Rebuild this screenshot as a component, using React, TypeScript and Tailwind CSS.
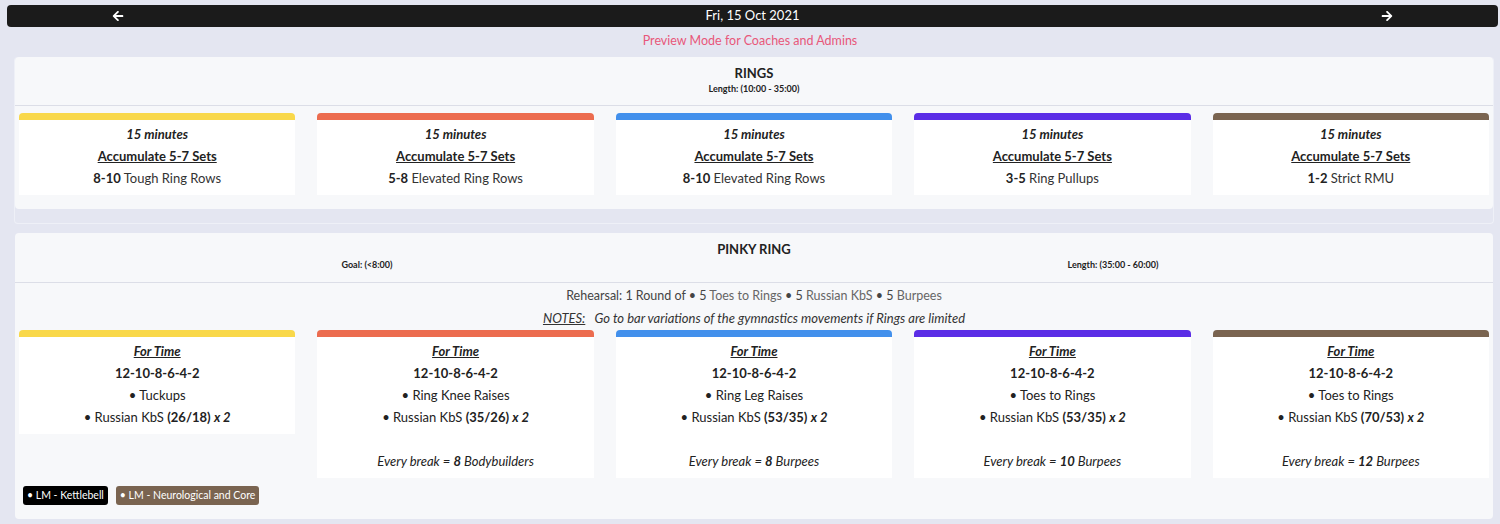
import React from "react";
import { FaArrowLeft, FaArrowRight } from "react-icons/fa";

const colors = ["bg-[#f9d84a]", "bg-[#ec6c4f]", "bg-[#4290ec]", "bg-[#5b2de6]", "bg-[#7a6450]"];

const rings = [
  { n: "8-10", m: "Tough Ring Rows" },
  { n: "5-8", m: "Elevated Ring Rows" },
  { n: "8-10", m: "Elevated Ring Rows" },
  { n: "3-5", m: "Ring Pullups" },
  { n: "1-2", m: "Strict RMU" },
];

const pinky = [
  { a: "Tuckups", w: "(26/18)", b: null as null | { n: string; m: string } },
  { a: "Ring Knee Raises", w: "(35/26)", b: { n: "8", m: "Bodybuilders" } },
  { a: "Ring Leg Raises", w: "(53/35)", b: { n: "8", m: "Burpees" } },
  { a: "Toes to Rings", w: "(53/35)", b: { n: "10", m: "Burpees" } },
  { a: "Toes to Rings", w: "(70/53)", b: { n: "12", m: "Burpees" } },
];

function Card({ color, children }: { color: string; children: React.ReactNode }) {
  return (
    <div className="flex flex-col">
      <div className={`h-[7px] rounded-t-[4px] ${color}`} />
      <div className="bg-white text-center leading-[22px] text-[13px] text-[#222]">{children}</div>
    </div>
  );
}

export default function App() {
  return (
    <div className="min-h-[524px] bg-[#e4e6f1] pt-[5px] font-['Lato','Noto_Sans',sans-serif] text-[#222]">
      <div className="ml-[7px] mr-[2px] h-[22px] bg-[#1b1b1b] rounded-[4px] flex items-center text-white text-[13px]">
        <div className="w-[222px] flex justify-center">
          <FaArrowLeft size={12} />
        </div>
        <div className="flex-1 text-center">Fri, 15 Oct 2021</div>
        <div className="w-[222px] flex justify-center">
          <FaArrowRight size={12} />
        </div>
      </div>
      <div className="h-[30px] pt-[5px] leading-[18px] text-center text-[12.5px] text-[#e8577a]">
        Preview Mode for Coaches and Admins
      </div>

      {/* RINGS */}
      <div className="ml-[14px] mr-[6px] border border-[#eef0f7] border-t-0 rounded-[4px] pb-[14px]">
        <div className="bg-[#f7f8fa] rounded-[4px] pb-[14px]">
          <div className="pt-[7px] pb-[9px] text-center border-b border-[#dcdee7]">
            <div className="text-[13px] font-bold leading-[18px]">RINGS</div>
            <div className="text-[9px] font-bold leading-[14px]">Length: (10:00 - 35:00)</div>
          </div>
          <div className="grid grid-cols-5 gap-[22px] px-[4px] pt-[7px]">
            {rings.map((r, i) => (
              <Card key={i} color={colors[i]}>
                <div className="pt-[3px] pb-[6px]">
                  <div className="font-bold italic">15 minutes</div>
                  <div className="font-bold underline">Accumulate 5-7 Sets</div>
                  <div>
                    <span className="font-bold">{r.n}</span> <span className="text-[#333]">{r.m}</span>
                  </div>
                </div>
              </Card>
            ))}
          </div>
        </div>
      </div>

      {/* PINKY RING */}
      <div className="ml-[15px] mr-[7px] mt-[9px] bg-[#f7f8fa] rounded-[4px] pb-[14px]">
        <div className="pt-[7px] pb-[10px] border-b border-[#dcdee7]">
          <div className="text-[13px] font-bold leading-[18px] text-center">PINKY RING</div>
          <div className="ml-[-21px] w-[1492px] grid grid-cols-2 text-[9px] font-bold leading-[14px] text-center">
            <div>Goal: (&lt;8:00)</div>
            <div>Length: (35:00 - 60:00)</div>
          </div>
        </div>
        <div className="pt-[2px] text-center leading-[22px] text-[#444]">
          <div className="text-[12.5px]">
            Rehearsal: 1 Round of • 5 <span className="text-[#666]">Toes to Rings</span> • 5{" "}
            <span className="text-[#666]">Russian KbS</span> • 5 <span className="text-[#666]">Burpees</span>
          </div>
          <div className="italic text-[#333] text-[13px]">
            <span className="underline">NOTES:</span>&nbsp;&nbsp; Go to bar variations of the gymnastics movements if Rings are limited
          </div>
        </div>
        <div className="grid grid-cols-5 gap-[22px] px-[4px] pt-[1px] items-start">
          {pinky.map((p, i) => (
            <Card key={i} color={colors[i]}>
              <div className="pt-[3px] pb-[6px]">
                <div className="font-bold italic underline">For Time</div>
                <div className="font-bold">12-10-8-6-4-2</div>
                <div>• {p.a}</div>
                <div>
                  • Russian KbS <span className="font-bold">{p.w}</span>{" "}
                  <span className="font-bold italic">x 2</span>
                </div>
                {p.b && (
                  <>
                    <div>&nbsp;</div>
                    <div className="italic">
                      Every break = <span className="font-bold">{p.b.n}</span> {p.b.m}
                    </div>
                  </>
                )}
              </div>
            </Card>
          ))}
        </div>
        <div className="flex gap-[8px] pl-[8px] mt-[8px]">
          <div className="h-[19px] px-[4px] rounded-[3px] bg-black text-white text-[10.5px] leading-[19px]">
            • LM - Kettlebell
          </div>
          <div className="h-[19px] px-[4px] rounded-[3px] bg-[#7a6450] text-white text-[10.5px] leading-[19px]">
            • LM - Neurological and Core
          </div>
        </div>
      </div>
    </div>
  );
}
